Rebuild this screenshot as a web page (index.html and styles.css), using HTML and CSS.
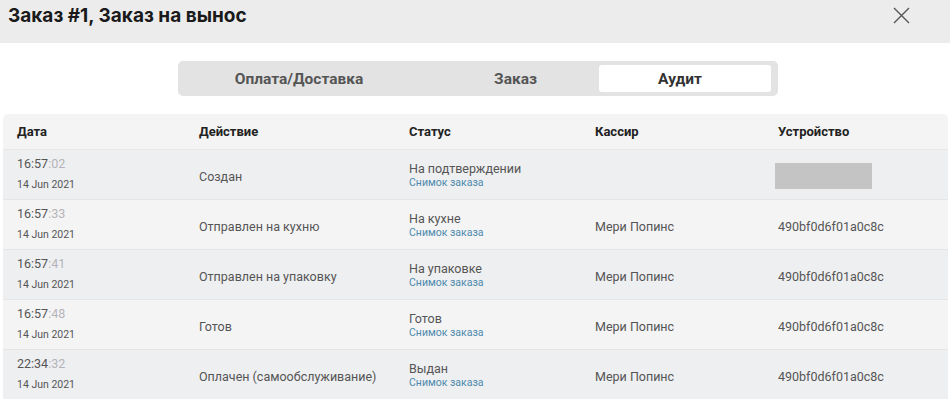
FILE: index.html
```html
<!DOCTYPE html>
<html lang="ru">
<head>
<meta charset="utf-8">
<link rel="stylesheet" href="styles.css">
</head>
<body>
<div class="modal">
  <header class="head">
    <h1 class="title">Заказ #1, Заказ на вынос</h1>
    <button class="close" aria-label="Закрыть">
      <svg width="17" height="17" viewBox="0 0 17 17"><path d="M1 1L16 16M16 1L1 16" stroke="#555" stroke-width="1.4" fill="none"/></svg>
    </button>
  </header>
  <div class="tabs-wrap">
    <div class="tabs">
      <div class="tab t1">Оплата/Доставка</div>
      <div class="tab t2">Заказ</div>
      <div class="tab t3 active">Аудит</div>
    </div>
  </div>
  <div class="table">
    <div class="row head-row">
      <div>Дата</div><div>Действие</div><div>Статус</div><div>Кассир</div><div>Устройство</div>
    </div>
    <div class="row odd">
      <div class="date"><span class="time">16:57<span class="sec">:02</span></span><span class="day">14 Jun 2021</span></div>
      <div>Создан</div>
      <div class="status"><span>На подтверждении</span><a class="snap">Снимок заказа</a></div>
      <div></div>
      <div><span class="device-blank"></span></div>
    </div>
    <div class="row">
      <div class="date"><span class="time">16:57<span class="sec">:33</span></span><span class="day">14 Jun 2021</span></div>
      <div>Отправлен на кухню</div>
      <div class="status"><span>На кухне</span><a class="snap">Снимок заказа</a></div>
      <div>Мери Попинс</div>
      <div>490bf0d6f01a0c8c</div>
    </div>
    <div class="row odd">
      <div class="date"><span class="time">16:57<span class="sec">:41</span></span><span class="day">14 Jun 2021</span></div>
      <div>Отправлен на упаковку</div>
      <div class="status"><span>На упаковке</span><a class="snap">Снимок заказа</a></div>
      <div>Мери Попинс</div>
      <div>490bf0d6f01a0c8c</div>
    </div>
    <div class="row">
      <div class="date"><span class="time">16:57<span class="sec">:48</span></span><span class="day">14 Jun 2021</span></div>
      <div>Готов</div>
      <div class="status"><span>Готов</span><a class="snap">Снимок заказа</a></div>
      <div>Мери Попинс</div>
      <div>490bf0d6f01a0c8c</div>
    </div>
    <div class="row odd last">
      <div class="date"><span class="time">22:34<span class="sec">:32</span></span><span class="day">14 Jun 2021</span></div>
      <div>Оплачен (самообслуживание)</div>
      <div class="status"><span>Выдан</span><a class="snap">Снимок заказа</a></div>
      <div>Мери Попинс</div>
      <div>490bf0d6f01a0c8c</div>
    </div>
  </div>
</div>
</body>
</html>
```
FILE: styles.css
```css
* { box-sizing: border-box; }
html, body { margin: 0; padding: 0; background: #fff; }
body { font-family: Roboto, "Liberation Sans", sans-serif; color: #555; width: 950px; height: 415px; overflow: hidden; }

.head {
  height: 43px;
  background: #ececec;
  display: flex;
  align-items: flex-start;
  justify-content: space-between;
  padding: 4px 8px 0 8px;
}
.title { margin: 0; font-family: Inter, Roboto, sans-serif; font-size: 19px; line-height: 24px; font-weight: 700; color: #1a1a1a; }
.close { border: 0; background: none; padding: 0; margin-right: 32px; margin-top: 3px; display: flex; }

.tabs-wrap { display: flex; padding-top: 18px; padding-left: 178px; }
.tabs {
  width: 600px;
  height: 35px;
  background: #e3e3e3;
  border-radius: 5px;
  padding: 4px 7px 4px 4px;
  display: grid;
  grid-template-columns: 234px 183px 172px;
}
.tab {
  display: flex; align-items: center; justify-content: center;
  font-size: 15.5px; font-weight: 700; color: #555; border-radius: 3px;
}
.t2 { padding-left: 16px; }
.tab.active { background: #fff; color: #333; padding-right: 10px; }

.table { margin: 18px 2px 0 3px; }
.row {
  display: grid;
  grid-template-columns: 182px 210px 186px 183px 1fr;
  padding-left: 14px;
  padding-top: 4px;
  height: 50px;
  align-items: center;
  font-size: 12.5px;
  color: #555;
  background: #f4f4f5;
  border-bottom: 1px solid #e4e5e7;
}
.row.odd { background: #eeeff1; }
.row.last { border-bottom: 0; height: 49px; }
.head-row {
  height: 36px;
  padding-top: 0;
  background: #f4f4f4;
  font-size: 13px;
  font-weight: 700;
  color: #222;
  border-radius: 5px 5px 0 0;
  border-bottom: 1px solid #e8e8e8;
}
.date { display: flex; flex-direction: column; gap: 8px; margin-top: -6px; }
.time { font-size: 12.5px; color: #555; line-height: 14px; }
.sec { color: #b4b4ba; }
.day { font-size: 10.5px; color: #555; line-height: 12px; }
.status { display: flex; flex-direction: column; gap: 1px; margin-top: -3px; }
.status span { line-height: 14px; color: #555; }
.snap { font-size: 10.5px; color: #4d8aad; line-height: 12px; }
.device-blank { display: block; width: 97px; height: 26px; background: #c4c4c4; margin-left: -3px; margin-top: -1px; }
```
